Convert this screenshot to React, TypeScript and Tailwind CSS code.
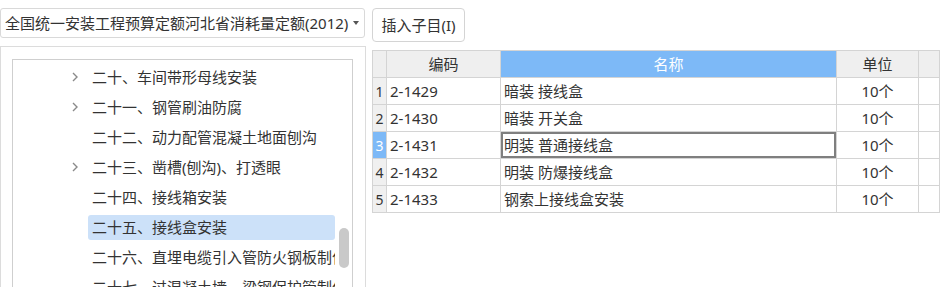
const TREE = [
  { label: "二十、车间带形母线安装", arrow: true },
  { label: "二十一、钢管刷油防腐", arrow: true },
  { label: "二十二、动力配管混凝土地面刨沟", arrow: false },
  { label: "二十三、凿槽(刨沟)、打透眼", arrow: true },
  { label: "二十四、接线箱安装", arrow: false },
  { label: "二十五、接线盒安装", arrow: false, selected: true },
  { label: "二十六、直埋电缆引入管防火钢板制作", arrow: false },
  { label: "二十七、过混凝土墙、梁钢保护管制作", arrow: false },
];

const ROWS = [
  { code: "2-1429", name: "暗装 接线盒", unit: "10个" },
  { code: "2-1430", name: "暗装 开关盒", unit: "10个" },
  { code: "2-1431", name: "明装 普通接线盒", unit: "10个" },
  { code: "2-1432", name: "明装 防爆接线盒", unit: "10个" },
  { code: "2-1433", name: "钢索上接线盒安装", unit: "10个" },
];

const cell = "h-[27px] border-r border-b border-[#d4d4d4] flex items-center";

function Chevron() {
  return (
    <svg width="8" height="12" viewBox="0 0 8 12" fill="none" stroke="#8a8a8a" strokeWidth={1.4}>
      <path d="M2 2l4 4-4 4" />
    </svg>
  );
}

export default function App() {
  return (
    <div
      className="w-[940px] h-[287px] overflow-hidden bg-white flex text-[15px] text-[#333]"
      style={{ fontFamily: '"Noto Sans", "Noto Sans CJK SC", sans-serif' }}
    >
      {/* left column */}
      <div className="w-[366px] flex flex-col pt-[8px]">
        <div className="h-[30px] mr-[1px] border border-[#d9d9d9] rounded-[3px] flex items-center pl-[4px] pr-[5px] whitespace-nowrap overflow-hidden">
          <span className="flex-1 min-w-0 overflow-hidden">全国统一安装工程预算定额河北省消耗量定额(2012)</span>
          <svg width="6" height="4" viewBox="0 0 6 4" className="shrink-0 ml-[2px]">
            <path d="M0 0h6L3 4z" fill="#555" />
          </svg>
        </div>

        <div className="mt-[8px] flex-1 border-l border-t border-r border-[#dcdcdc] pl-[11px] pr-[12px] pt-[12px] min-h-0">
          <div className="h-full border-l border-t border-r border-[#cfcfcf] relative overflow-hidden">
            <div className="pt-[2px] w-[322px] overflow-hidden">
              {TREE.map((t) => (
                <div key={t.label} className="h-[30px] flex items-center whitespace-nowrap">
                  <div className="w-[75px] flex justify-end pr-[9px] shrink-0">{t.arrow && <Chevron />}</div>
                  <div
                    className={
                      "h-[25px] flex items-center pl-[4px] flex-1 min-w-0 overflow-hidden rounded-[3px] " +
                      (t.selected ? "bg-[#cce1f9]" : "")
                    }
                  >
                    {t.label}
                  </div>
                </div>
              ))}
            </div>
            {/* scrollbar thumb */}
            <div className="absolute left-[326px] top-[168px] w-[10px] h-[40px] rounded-full bg-[#c9c9c9]" />
          </div>
        </div>
      </div>

      {/* right column */}
      <div className="flex-1 flex flex-col pl-[6px] pt-[8px]">
        <button className="h-[34px] w-[93px] border border-[#d4d4d4] rounded-[4px] bg-white text-[#333] text-[15px] flex items-center justify-center whitespace-nowrap">
          插入子目(I)
        </button>

        <div className="mt-[8px] border-l border-t border-[#d4d4d4] grid grid-cols-[14px_114px_336px_82px_1fr]">
          <div className={cell + " bg-[#efefef]"} />
          <div className={cell + " bg-[#efefef] justify-center"}>编码</div>
          <div className={cell + " bg-[#7db9f7] text-white justify-center"}>名称</div>
          <div className={cell + " bg-[#efefef] justify-center"}>单位</div>
          <div className={cell + " bg-[#efefef]"} />

          {ROWS.map((r, i) => {
            const sel = i === 2;
            return [
              <div
                key={r.code + "n"}
                className={cell + " justify-center text-[14px] " + (sel ? "bg-[#7db9f7] text-white" : "bg-[#f0f0f0]")}
              >
                {i + 1}
              </div>,
              <div key={r.code + "c"} className={cell + " pl-[3px]"}>
                {r.code}
              </div>,
              <div
                key={r.code + "m"}
                className={cell + " pl-[3px] " + (sel ? "shadow-[inset_0_0_0_2px_#7f7f7f]" : "")}
              >
                {r.name}
              </div>,
              <div key={r.code + "u"} className={cell + " justify-center"}>
                {r.unit}
              </div>,
              <div key={r.code + "e"} className={cell} />,
            ];
          })}
        </div>
      </div>
    </div>
  );
}
